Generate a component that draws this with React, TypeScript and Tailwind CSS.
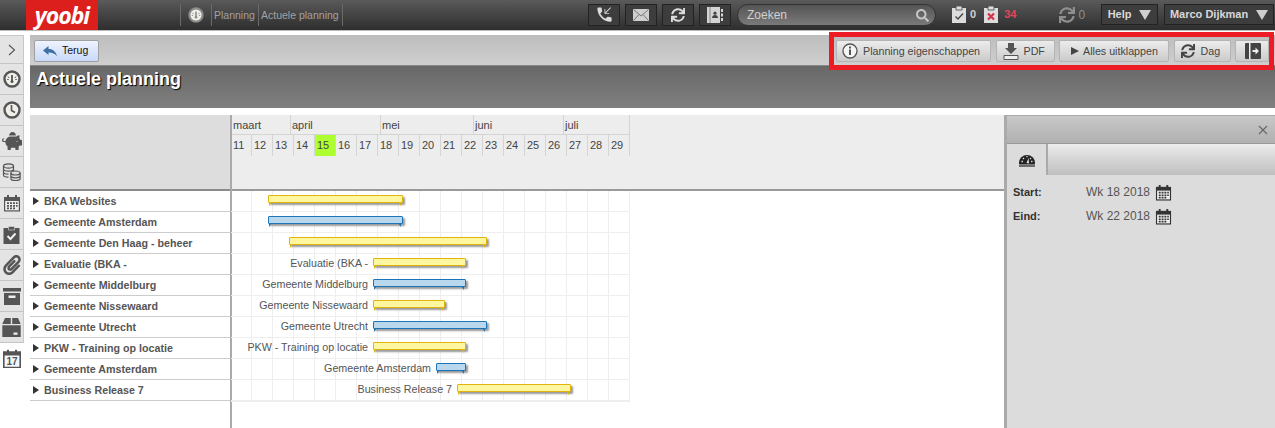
import { ReactNode } from 'react';
import { FaPaperclip, FaPiggyBank, FaSearch, FaSync } from 'react-icons/fa';
import { MdPhoneCallback } from 'react-icons/md';

const CELL_COUNT = 19;
const FIRST_WEEK = 11;
const CURRENT_WEEK = 15;
const GRID_LEFT = 231; // page x of the first week column

interface GanttRow {
    name: string;
    from: number;
    to: number;
    color: 'yellow' | 'blue';
    label?: string;
}

const rows: GanttRow[] = [
    { name: 'BKA Websites', from: 268, to: 403, color: 'yellow' },
    { name: 'Gemeente Amsterdam', from: 268, to: 403, color: 'blue' },
    { name: 'Gemeente Den Haag - beheer', from: 289, to: 487, color: 'yellow' },
    { name: 'Evaluatie (BKA -', from: 373, to: 466, color: 'yellow', label: 'Evaluatie (BKA -' },
    { name: 'Gemeente Middelburg', from: 373, to: 466, color: 'blue', label: 'Gemeente Middelburg' },
    { name: 'Gemeente Nissewaard', from: 373, to: 445, color: 'yellow', label: 'Gemeente Nissewaard' },
    { name: 'Gemeente Utrecht', from: 373, to: 487, color: 'blue', label: 'Gemeente Utrecht' },
    { name: 'PKW - Training op locatie', from: 373, to: 466, color: 'yellow', label: 'PKW - Training op locatie' },
    { name: 'Gemeente Amsterdam', from: 436, to: 466, color: 'blue', label: 'Gemeente Amsterdam' },
    { name: 'Business Release 7', from: 457, to: 571, color: 'yellow', label: 'Business Release 7' },
];

const months = [
    { name: 'maart', width: 'w-[59px]' },
    { name: 'april', width: 'w-[90px]' },
    { name: 'mei', width: 'w-[93px]' },
    { name: 'juni', width: 'w-[90px]' },
    { name: 'juli', width: 'w-[66px]' },
];

const weeks = Array.from({ length: CELL_COUNT }, (_, i) => FIRST_WEEK + i);

function Gauge({ size = 18, color = '#555' }: { size?: number; color?: string }) {
    return (
        <svg width={size} height={size} viewBox="0 0 18 18">
            <circle cx="9" cy="9" r="7.5" fill="#f1efe9" stroke={color} strokeWidth="2.4" />
            <path d="M9 5v6" stroke={color} strokeWidth="1.800" />
            <path d="M5 6.500l1.200 1.500M13 6.500l-1.200 1.500M4.200 9.500h1.500M12.300 9.500h1.500" stroke={color} strokeWidth="1" />
            <circle cx="9" cy="11.500" r="1.500" fill={color} />
        </svg>
    );
}

function Clock() {
    return (
        <svg width="18" height="18" viewBox="0 0 18 18" fill="none">
            <circle cx="9" cy="9" r="7.5" fill="#f1efe9" stroke="#555" strokeWidth="2.4" />
            <path d="M8.500 4v5.500l3.500 2" stroke="#555" strokeWidth="1.600" />
        </svg>
    );
}

function Coins() {
    return (
        <svg width="19" height="18" viewBox="0 0 19 18" fill="none" stroke="#555" strokeWidth="1.2">
            <ellipse cx="6.5" cy="3" rx="5" ry="2.2" fill="#ddd" />
            <path d="M1.500 3v9c0 1.200 2.200 2.200 5 2.200M11.500 3v5M1.500 6c0 1.200 2.200 2.200 5 2.200s5-1 5-2.200M1.500 9c0 1.200 2.200 2.200 5 2.200" />
            <ellipse cx="13.5" cy="10" rx="4.6" ry="2" fill="#ddd" />
            <path d="M8.900 10v5.500c0 1.100 2 2 4.600 2s4.600-.9 4.600-2V10M8.900 12.800c0 1.100 2 2 4.600 2s4.600-.9 4.600-2" />
        </svg>
    );
}

function Calendar({ size = 18, color = '#555' }: { size?: number; color?: string }) {
    return (
        <svg width={size} height={size} viewBox="0 0 18 18">
            <path d="M1 3h16v14.500H1z" fill={color} />
            <path d="M2.200 7h13.600v9.300H2.200z" fill="#eee" />
            <path d="M4 1h2v3.500H4zM12 1h2v3.500h-2z" fill={color} />
            <path
                d="M4 8.300h2v1.700H4zM7 8.300h2v1.700H7zM10 8.300h2v1.700h-2zM13 8.300h1.600v1.700H13zM4 11h2v1.700H4zM7 11h2v1.700H7zM10 11h2v1.700h-2zM13 11h1.600v1.700H13zM4 13.600h2v1.700H4zM7 13.600h2v1.700H7zM10 13.600h2v1.700h-2z"
                fill={color}
            />
        </svg>
    );
}

function ClipboardCheck() {
    return (
        <svg width="17" height="19" viewBox="0 0 17 19">
            <path d="M.5 3h16v16H.5z" fill="#555" />
            <path d="M5.500 1.500h6V5h-6z" fill="#555" stroke="#ddd" strokeWidth=".6" />
            <path d="M4.500 11l3 3 5-5.500" fill="none" stroke="#f1f1f1" strokeWidth="2" />
        </svg>
    );
}

function ArchiveBox() {
    return (
        <svg width="18" height="17" viewBox="0 0 18 17">
            <path d="M0 0h18v3.500H0z" fill="#555" />
            <path d="M1 5h16v12H1z" fill="#555" />
            <path d="M5.500 7.500h7v2.500h-7z" fill="#eee" />
        </svg>
    );
}

function Parcel() {
    return (
        <svg width="19" height="19" viewBox="0 0 19 19">
            <path d="M3 0h5.800v6H.3zM10.200 0H16l2.700 6H10.200zM.3 7.200h18.400V19H.3z" fill="#555" />
            <path d="M11.500 14.500h4v2.300h-4z" fill="#eee" />
        </svg>
    );
}

function CalendarToday() {
    return (
        <svg width="18" height="19" viewBox="0 0 18 19">
            <path d="M.8 3h16.400v15.500H.8z" fill="#f4f8fb" stroke="#555" strokeWidth="1.600" />
            <path d="M1 3h16v3.500H1z" fill="#555" />
            <path d="M4 .8h2v3.500H4zM12 .8h2v3.500h-2z" fill="#555" />
            <text x="9" y="16.300" textAnchor="middle" fontSize="10" fontWeight="700" fill="#555" fontFamily="Liberation Sans, sans-serif">
                17
            </text>
        </svg>
    );
}

function Envelope() {
    return (
        <svg width="16" height="12" viewBox="0 0 16 12">
            <path d="M0 0h16v12H0z" fill="#cfcfcf" />
            <path d="M.5.500L8 7l7.500-6.500M.5 11.500L6 5.500M15.500 11.500L10 5.500" fill="none" stroke="#777" strokeWidth="1" />
        </svg>
    );
}

function AddressBook() {
    return (
        <svg width="16" height="16" viewBox="0 0 16 16">
            <path d="M0 0h13v16H0z" fill="#d4d4d4" />
            <path d="M2.500 0h1v16h-1z" fill="#888" />
            <circle cx="8" cy="6.200" r="1.600" fill="#444" />
            <path d="M5 11c0-2 1.300-3 3-3s3 1 3 3z" fill="#444" />
            <path d="M14 2h2v3h-2zM14 6.500h2v3h-2zM14 11h2v3h-2z" fill="#d4d4d4" />
        </svg>
    );
}

function Triangle({ className }: { className: string }) {
    return (
        <svg width="12" height="10" viewBox="0 0 12 10" className={className}>
            <path d="M0 0h12L6 10z" fill="currentColor" />
        </svg>
    );
}

function TaskClip({ bad }: { bad?: boolean }) {
    return (
        <svg width="14" height="17" viewBox="0 0 14 17">
            <path d="M0 2h14v15H0z" fill="#dcdcdc" />
            <path d="M4 0h6v4H4z" fill="#dcdcdc" stroke="#444" strokeWidth=".8" />
            {bad ? (
                <path d="M4 7.500l6 6M10 7.500l-6 6" stroke="#d8324a" strokeWidth="2.200" />
            ) : (
                <path d="M3.500 10.500l2.500 2.500 5-5.500" fill="none" stroke="#444" strokeWidth="1.300" />
            )}
        </svg>
    );
}

function Speedometer() {
    return (
        <svg width="18" height="15" viewBox="0 0 18 15">
            <path d="M1 11a8 8 0 0 1 16 0c0 .8-.1 1-.4 1.500H1.400C1.100 12 1 11.800 1 11z" fill="#222" />
            <path d="M3.500 9.500h1.500M5 6l1 1M9 4v1.300M13 6l-1 1M13 9.500h1.500" stroke="#ddd" strokeWidth="1.300" />
            <path d="M8.500 11l2-5 .6 5.500z" fill="#ddd" />
            <path d="M1 14h16" stroke="#222" strokeWidth="1.200" />
        </svg>
    );
}

function ToolButton({ size, children }: { size: string; children: ReactNode }) {
    return (
        <button
            className={`${size} h-[22px] flex items-center rounded-[2px] border border-[#b4b4b4] bg-gradient-to-b from-[#ececec] to-[#cbcbcb] text-[10.7px] text-[#444] whitespace-nowrap`}
        >
            {children}
        </button>
    );
}

function HeaderIconButton({ children }: { children: ReactNode }) {
    return (
        <div className="w-[32px] h-[22px] flex items-center justify-center border border-[#222] bg-[#3d3d3d]">
            {children}
        </div>
    );
}

function TopBar() {
    return (
        <div className="h-[30px] shrink-0 flex items-stretch bg-gradient-to-b from-[#5a5a5a] to-[#2e2e2e]">
            <div className="ml-[26px] w-[72px] flex items-center justify-center pt-[1px] bg-[#dc1f1c] text-white text-[23px] leading-none font-bold italic tracking-[-1px] font-['Open_Sans',sans-serif]">
                yoobi
            </div>
            <div className="ml-[82px] my-[4px] w-[163px] flex items-center text-[10.500px] text-[#a2a2a2] whitespace-nowrap border-l border-[#6a6a6a]">
                <div className="w-[30px] flex justify-center">
                    <Gauge size={16} color="#8a8a8a" />
                </div>
                <span className="w-[47px] border-l border-[#6a6a6a] pl-[2px] leading-[22px]">Planning</span>
                <span className="w-[85px] border-l border-r border-[#6a6a6a] pl-[2px] leading-[22px]">Actuele planning</span>
            </div>
            <div className="ml-[245px] flex items-center gap-[5px] pb-[1px]">
                <HeaderIconButton>
                    <MdPhoneCallback className="text-[#dcdcdc] text-[19px]" />
                </HeaderIconButton>
                <HeaderIconButton>
                    <Envelope />
                </HeaderIconButton>
                <HeaderIconButton>
                    <FaSync className="text-[#dcdcdc] text-[14px]" />
                </HeaderIconButton>
                <HeaderIconButton>
                    <AddressBook />
                </HeaderIconButton>
            </div>
            <div className="ml-[6px] my-[4px] w-[199px] flex items-center justify-between rounded-full border border-[#333] bg-gradient-to-b from-[#555] to-[#7a7a7a] pl-[9px] pr-[6px] text-[12px] text-[#d0d0d0]">
                Zoeken
                <FaSearch className="text-[#c4c4c4] text-[13px]" />
            </div>
            <div className="ml-[16px] flex items-center text-[11px] font-bold pb-[1px]">
                <TaskClip />
                <span className="ml-[4px] text-[#d0d0d0]">0</span>
                <span className="ml-[8px]">
                    <TaskClip bad />
                </span>
                <span className="ml-[6px] text-[#e2465a]">34</span>
                <FaSync className="ml-[43px] text-[#8e8e8e] text-[16px]" />
                <span className="ml-[3px] font-normal text-[#8e8e8e] text-[12px]">0</span>
            </div>
            <div className="ml-[16px] flex items-center gap-[6px] pb-[1px] text-[11px] font-bold text-[#d8d8d8]">
                <div className="w-[57px] h-[21px] flex items-center justify-center gap-[8px] border border-[#222] bg-[#3d3d3d]">
                    Help
                    <Triangle className="text-[#cfcfcf]" />
                </div>
                <div className="w-[110px] h-[21px] flex items-center justify-center gap-[8px] border border-[#222] bg-[#3d3d3d]">
                    Marco Dijkman
                    <Triangle className="text-[#cfcfcf]" />
                </div>
            </div>
        </div>
    );
}

function Sidebar() {
    const items = [
        <svg key="chevron" width="8" height="12" viewBox="0 0 8 12" fill="none">
            <path d="M1 1l5.500 5L1 11" stroke="#555" strokeWidth="1.100" />
        </svg>,
        <Gauge key="gauge" />,
        <Clock key="clock" />,
        <FaPiggyBank key="piggy" className="text-[#555] text-[20px]" />,
        <Coins key="coins" />,
        <Calendar key="calendar" />,
        <ClipboardCheck key="clipboard" />,
        <FaPaperclip key="clip" className="text-[#555] text-[20px]" />,
        <ArchiveBox key="archive" />,
        <Parcel key="parcel" />,
    ];
    return (
        <div className="w-[24px] shrink-0 pt-[4px]">
            <div className="border-r border-t border-[#c8c8c8]">
                {items.map((icon, i) => (
                    <div
                        key={i}
                        className={`${i === 0 ? 'h-[28px]' : 'h-[31px]'} flex items-center justify-center bg-[#e4e4e4] border-b border-[#c4c4c4]`}
                    >
                        {icon}
                    </div>
                ))}
            </div>
            <div className="h-[31px] flex items-center justify-center">
                <CalendarToday />
            </div>
        </div>
    );
}

function PageHeader() {
    return (
        <>
            <div className="h-[31px] shrink-0 flex items-start justify-between pt-[5px] pl-[4px] pr-[6px] bg-gradient-to-b from-[#bdbdbd] to-[#cfcfcf] border-b border-[#888]">
                <button className="w-[65px] h-[22px] flex items-center gap-[5px] pl-[8px] rounded-[2px] border border-[#a0a0a0] bg-gradient-to-b from-[#eef4ff] to-[#c9d9f8] text-[10.500px] text-[#111]">
                    <svg width="14" height="11" viewBox="0 0 14 11">
                        <path d="M0 4.500L5.500 0v3C10 3 13 5.500 14 10.500 12 7.500 9.500 6.500 5.500 6.500V9z" fill="#3f6fa3" />
                    </svg>
                    Terug
                </button>
                <div className="flex gap-[4.500px]">
                    <ToolButton size="w-[155px] pl-[5px] gap-[5px]">
                        <svg width="16" height="16" viewBox="0 0 16 16">
                            <circle cx="8" cy="8" r="7" fill="#f4f4f4" stroke="#555" strokeWidth="1.300" />
                            <path d="M7 6.500h2V12H7zM7 3.500h2v2H7z" fill="#555" />
                        </svg>
                        Planning eigenschappen
                    </ToolButton>
                    <ToolButton size="w-[59px] pl-[6px] gap-[5px]">
                        <svg width="16" height="17" viewBox="0 0 16 17">
                            <path d="M5 0h6v5h3l-6 6-6-6h3z" fill="#555" />
                            <path d="M1 12.500h14v4H1z" fill="#eee" stroke="#555" />
                        </svg>
                        PDF
                    </ToolButton>
                    <ToolButton size="w-[110px] pl-[11px] gap-[4px]">
                        <svg width="8" height="8" viewBox="0 0 8 8">
                            <path d="M0 0l8 4-8 4z" fill="#444" />
                        </svg>
                        Alles uitklappen
                    </ToolButton>
                    <ToolButton size="w-[57px] pl-[6px] gap-[6px]">
                        <FaSync className="text-[#444] text-[14px]" />
                        Dag
                    </ToolButton>
                    <ToolButton size="w-[34px] pl-[9px]">
                        <svg width="16" height="16" viewBox="0 0 16 16">
                            <path d="M1 0h14a1 1 0 0 1 1 1v14a1 1 0 0 1-1 1H1a1 1 0 0 1-1-1V1a1 1 0 0 1 1-1z" fill="#444" />
                            <path d="M4 0h1.500v16H4z" fill="#eee" />
                            <path d="M7.500 7h3V4.500L14 8l-3.500 3.500V9h-3z" fill="#eee" />
                        </svg>
                    </ToolButton>
                </div>
            </div>
            <div className="h-[42px] shrink-0 bg-gradient-to-b from-[#686868] to-[#808080] pl-[6px] text-[18px] leading-[26px] font-bold text-white [text-shadow:1px_1px_1px_#000]">
                Actuele planning
            </div>
        </>
    );
}

function Bar({ row }: { row: GanttRow }) {
    const yellow = row.color === 'yellow';
    const left = row.from - GRID_LEFT;
    const width = row.to - row.from;
    return (
        <>
            {row.label && (
                <span
                    className="absolute top-[1px] text-[10.700px] leading-[16px] whitespace-nowrap text-[#555]"
                    style={{ right: 399 - left + 5 }}
                >
                    {row.label}
                </span>
            )}
            <div
                className={`absolute top-[4px] h-[8px] border rounded-[1px] shadow-[2px_2px_2px_#999] ${yellow ? 'bg-[#fff6a0] border-[#dfb40f]' : 'bg-[#b9d8ee] border-[#1c75b8]'}`}
                style={{ left, width }}
            />
            <div
                className={`absolute top-[11px] w-0 h-0 border-t-[4px] border-r-[3px] border-r-transparent ${yellow ? 'border-t-[#dfb40f]' : 'border-t-[#1c75b8]'}`}
                style={{ left: left + 1 }}
            />
            <div
                className={`absolute top-[11px] w-0 h-0 border-t-[4px] border-l-[3px] border-l-transparent ${yellow ? 'border-t-[#dfb40f]' : 'border-t-[#1c75b8]'}`}
                style={{ left: left + width - 5 }}
            />
        </>
    );
}

function Timeline() {
    return (
        <div className="flex-1 min-w-0">
            <div className="h-[76px] bg-[#ededed] border-b-2 border-[#999] text-[11px] text-[#444]">
                <div className="flex h-[20px] w-[398px] border-b border-[#d4d4d4]">
                    {months.map((month) => (
                        <div key={month.name} className={`${month.width} pl-[1px] leading-[20px] border-r border-[#d4d4d4]`}>
                            {month.name}
                        </div>
                    ))}
                </div>
                <div className="flex h-[21px] -ml-px">
                    {weeks.map((week) => (
                        <div
                            key={week}
                            className={`w-[21px] pl-[2px] leading-[21px] border-r border-[#d4d4d4] ${week === CURRENT_WEEK ? 'bg-[#adff2f]' : ''}`}
                        >
                            {week}
                        </div>
                    ))}
                </div>
            </div>
            <div className="w-[399px] -ml-px border-b-2 border-[#eee]">
                {rows.map((row, i) => (
                    <div key={i} className="relative flex h-[21px] border-b border-[#eee] last:border-b-0 last:h-[20px]">
                        {weeks.map((week) => (
                            <div key={week} className="w-[21px] border-r border-[#eee]" />
                        ))}
                        <Bar row={row} />
                    </div>
                ))}
            </div>
        </div>
    );
}

function LeftPanel() {
    return (
        <div className="w-[200px] shrink-0">
            <div className="h-[76px] bg-[#dddddd] border-b-2 border-[#8a8a8a]" />
            {rows.map((row, i) => (
                <div key={i} className="h-[21px] flex items-center gap-[5px] pl-[3px] border-b border-[#ccc] text-[10.700px] font-bold text-[#555]">
                    <svg width="6" height="8" viewBox="0 0 6 8" className="shrink-0">
                        <path d="M0 0l6 4-6 4z" fill="#333" />
                    </svg>
                    {row.name}
                </div>
            ))}
        </div>
    );
}

function DetailPanel() {
    return (
        <div className="w-[271px] shrink-0 border-l-[3px] border-t border-[#aaa] bg-[#dcdcdc]">
            <div className="h-[28px] flex items-center justify-end pr-[7px] bg-gradient-to-b from-[#c8c8c8] to-[#b0b0b0] border-b border-[#999]">
                <svg width="10" height="10" viewBox="0 0 10 10">
                    <path d="M1 1l8 8M9 1l-8 8" stroke="#666" strokeWidth="1.100" />
                </svg>
            </div>
            <div className="h-[31px] flex bg-gradient-to-b from-[#ececec] to-[#bfbfbf]">
                <div className="w-[41px] flex items-center justify-center bg-[#dcdcdc] border-r-2 border-[#aaa]">
                    <Speedometer />
                </div>
            </div>
            <div className="pt-[5px] pl-[6px] grid grid-cols-[73px_1fr] auto-rows-[24px] items-center">
                {[
                    ['Start:', 'Wk 18 2018'],
                    ['Eind:', 'Wk 22 2018'],
                ].map(([label, value]) => (
                    <div key={label} className="contents">
                        <span className="text-[11px] font-bold text-[#333]">{label}</span>
                        <div className="flex items-center gap-[5px] text-[12px] text-[#555]">
                            {value}
                            <Calendar size={17} color="#333" />
                        </div>
                    </div>
                ))}
            </div>
        </div>
    );
}

export default function App() {
    return (
        <div className="relative w-[1275px] h-[428px] overflow-hidden flex flex-col bg-white font-['Liberation_Sans',Arial,sans-serif]">
            <TopBar />
            <div className="h-px shrink-0 bg-[#bbb]" />
            <div className="flex-1 min-h-0 flex">
                <Sidebar />
                <div className="flex-1 min-w-0 ml-[6px] pt-[4px] flex flex-col">
                    <PageHeader />
                    <div className="flex-1 min-h-0 mt-[7px] flex items-stretch">
                        <LeftPanel />
                        <div className="w-[2px] shrink-0 bg-[#aaa]" />
                        <Timeline />
                        <DetailPanel />
                    </div>
                </div>
            </div>
            {/* red highlight drawn over the toolbar */}
            <div className="absolute left-[829px] top-[32px] w-[445px] h-[38px] border-[5px] border-[#ed1c24] pointer-events-none" />
        </div>
    );
}
